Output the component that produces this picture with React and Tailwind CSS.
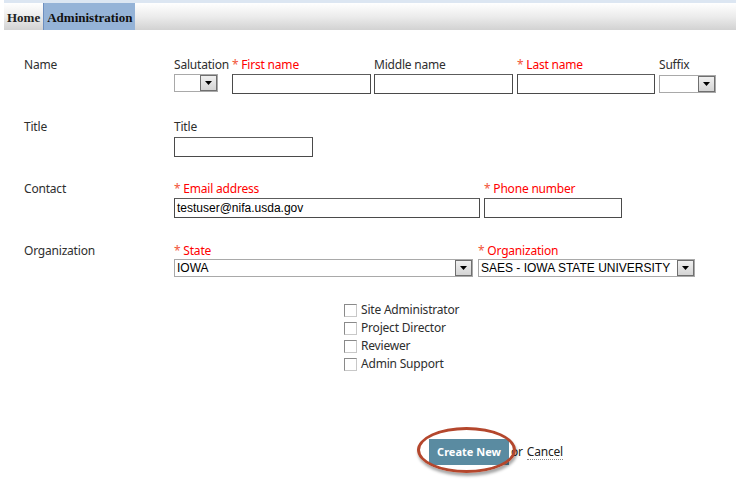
import { useState } from "react";

const Req = ({ children }) => (
  <div className="h-4 leading-4 text-[#ff0000] whitespace-nowrap">
    <span className="text-[#f2553a]">*</span> {children}
  </div>
);

const Lbl = ({ children }) => (
  <div className="h-4 leading-4 text-[#2e2e2e] whitespace-nowrap">{children}</div>
);

const TextBox = ({ width, value = "" }) => (
  <div
    className="h-5 bg-white border border-[#4a4a4a] border-t-[#5c5c5c] px-[2px] flex items-center font-['Liberation_Sans',Arial,sans-serif] text-[12px] tracking-normal text-black"
    style={{ width }}
  >
    {value}
  </div>
);

const Select = ({ width, value = "" }) => (
  <div
    className="h-[18px] bg-white border border-[#a9a9a9] flex items-stretch font-['Liberation_Sans',Arial,sans-serif] text-[12px] tracking-normal text-black"
    style={{ width }}
  >
    <div className="flex-1 pl-[2px] leading-4 whitespace-nowrap overflow-hidden">{value}</div>
    <div className="w-[17px] bg-gradient-to-b from-[#f0f0f0] to-[#d4d4d4] border border-[#6f6f6f] flex items-center justify-center">
      <svg width="7" height="4" viewBox="0 0 7 4">
        <path d="M0 0h7L3.5 4z" fill="#000" />
      </svg>
    </div>
  </div>
);

const Check = ({ label }) => {
  const [on, setOn] = useState(false);
  return (
    <div className="h-[18px] flex items-center">
      <div
        onClick={() => setOn(!on)}
        className="w-[13px] h-[13px] bg-white border-t border-l border-[#8a8a8a] border-r border-b border-r-[#c8c8c8] border-b-[#c8c8c8]"
      />
      <span className="ml-[4px] leading-4 text-[#2e2e2e]">{label}</span>
    </div>
  );
};

export default function App() {
  return (
    <div className="w-[736px] h-[480px] bg-white overflow-hidden font-['Noto_Sans','Open_Sans',sans-serif] text-[12px] tracking-[-0.2px]">
      {/* top nav */}
      <div className="ml-1 h-[3px] bg-[#dce6f2]" />
      <div className="ml-1 h-[27px] flex bg-gradient-to-b from-white via-[#ececec] to-[#d2d2d2] font-['Liberation_Serif',serif] font-bold text-[13px] tracking-normal text-[#222]">
        <div className="px-[3px] flex items-center pt-[2px]">Home</div>
        <div className="px-[3px] flex items-center pt-[2px] bg-[#95b3d7] border-l border-[#6d8fc0] text-[#111]">Administration</div>
      </div>

      <div className="pl-6 pt-[27px]">
        {/* Name */}
        <div className="flex h-[62px]">
          <div className="w-[150px]"><Lbl>Name</Lbl></div>
          <div className="flex">
            <div className="w-[58px]">
              <Lbl>Salutation</Lbl>
              <div className="mt-px"><Select width={44} /></div>
            </div>
            <div className="w-[142px]">
              <Req>First name</Req>
              <div className="mt-px"><TextBox width={139} /></div>
            </div>
            <div className="w-[143px]">
              <Lbl>Middle name</Lbl>
              <div className="mt-px"><TextBox width={139} /></div>
            </div>
            <div className="w-[142px]">
              <Req>Last name</Req>
              <div className="mt-px"><TextBox width={138} /></div>
            </div>
            <div>
              <Lbl>Suffix</Lbl>
              <div className="mt-[2px]"><Select width={57} /></div>
            </div>
          </div>
        </div>

        {/* Title */}
        <div className="flex h-[62px]">
          <div className="w-[150px]"><Lbl>Title</Lbl></div>
          <div>
            <Lbl>Title</Lbl>
            <div className="mt-[2px]"><TextBox width={139} /></div>
          </div>
        </div>

        {/* Contact */}
        <div className="flex h-[62px]">
          <div className="w-[150px]"><Lbl>Contact</Lbl></div>
          <div className="flex">
            <div className="w-[310px]">
              <Req>Email address</Req>
              <div className="mt-px"><TextBox width={306} value="testuser@nifa.usda.gov" /></div>
            </div>
            <div>
              <Req>Phone number</Req>
              <div className="mt-px"><TextBox width={138} /></div>
            </div>
          </div>
        </div>

        {/* Organization */}
        <div className="flex h-[58px]">
          <div className="w-[150px]"><Lbl>Organization</Lbl></div>
          <div className="flex">
            <div className="w-[304px]">
              <Req>State</Req>
              <Select width={299} value="IOWA" />
            </div>
            <div>
              <Req>Organization</Req>
              <Select width={217} value="SAES - IOWA STATE UNIVERSITY" />
            </div>
          </div>
        </div>

        {/* Roles */}
        <div className="ml-[320px]">
          <Check label="Site Administrator" />
          <Check label="Project Director" />
          <Check label="Reviewer" />
          <Check label="Admin Support" />
        </div>

        {/* Actions */}
        <div className="ml-[405px] mt-[66px] flex items-center">
          <div className="relative">
            <button className="w-[80px] h-[26px] bg-[#5a8ba1] text-white font-bold text-[11px] tracking-normal">
              Create New
            </button>
            <div className="absolute left-[-12px] top-[-12px] w-[99px] h-[46px] rounded-[50%] border-[3px] border-[#b4472d] shadow-[1px_3px_3px_rgba(0,0,0,0.35)]" />
          </div>
          <span className="ml-[2px] text-[#222]">or</span>
          <span className="ml-[4px] text-[#222] border-b border-dotted border-[#888] leading-[14px]">Cancel</span>
        </div>
      </div>
    </div>
  );
}
